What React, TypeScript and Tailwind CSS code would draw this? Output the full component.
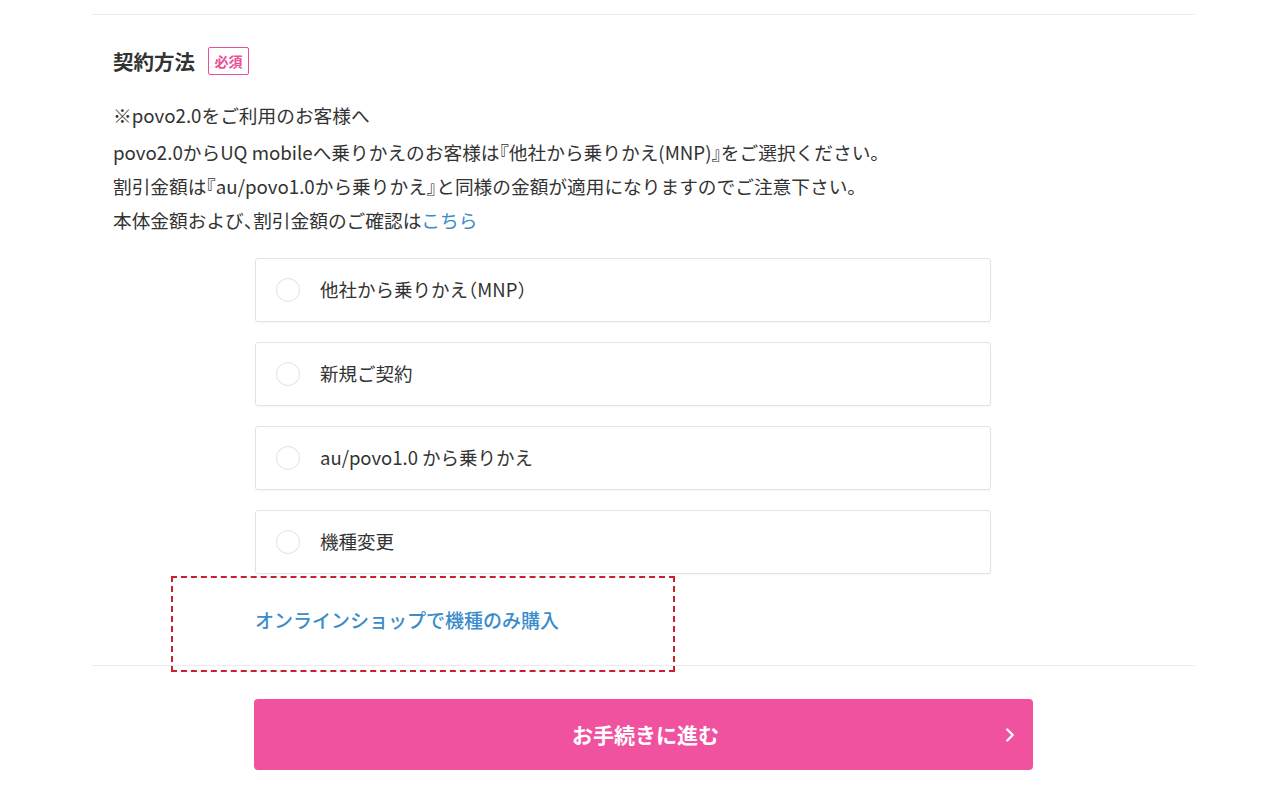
import type { ReactNode } from 'react';
import { ChevronRight } from 'lucide-react';

const font = { fontFamily: '"Noto Sans CJK JP", "Noto Sans", sans-serif' };

// half-width punctuation, like the site's font renders it
const P = ({ children }: { children: ReactNode }) => (
  <span style={{ fontFeatureSettings: '"halt"' }}>{children}</span>
);

const options: ReactNode[] = [
  <>
    他社から乗りかえ<P>（</P>MNP<P>）</P>
  </>,
  '新規ご契約',
  'au/povo1.0 から乗りかえ',
  '機種変更',
];

export default function App() {
  return (
    <div className="min-h-[800px] bg-white text-[#333]" style={font}>
      <div className="ml-[92px] mr-[85px] pt-[14px]">
        <div className="h-px bg-[#ececec]" />

        <div className="px-[21px]">
          <div className="mt-[32px] flex h-[28px] items-center gap-[13px]">
            <h2 className="text-[20.5px] font-bold leading-none">契約方法</h2>
            <span className="flex h-[28px] w-[41px] items-center justify-center rounded-[2px] border border-[#e8509a] text-[14px] font-bold text-[#e8509a]">
              必須
            </span>
          </div>

          <div className="mt-[23px] text-[18.7px] leading-[34px]">
            <p className="mb-[3px]">※povo2.0をご利用のお客様へ</p>
            <p>
              povo2.0からUQ mobileへ乗りかえのお客様は<P>『</P>他社から乗りかえ(MNP)<P>』</P>をご選択ください。
            </p>
            <p>
              割引金額は<P>『</P>au/povo1.0から乗りかえ<P>』</P>と同様の金額が適用になりますのでご注意下さい。
            </p>
            <p>
              本体金額および<P>、</P>割引金額のご確認は<span className="text-[#3b8cca]">こちら</span>
            </p>
          </div>
        </div>

        <div className="ml-[163px] mt-[21px] flex w-[736px] flex-col gap-[20px]">
          {options.map((o, i) => (
            <label
              key={i}
              className="flex h-[64px] items-center gap-[20px] rounded-[3px] border border-[#e3e3e3] bg-white px-[20px] shadow-[0_1px_2px_rgba(0,0,0,0.04)]"
            >
              <span className="h-[24px] w-[24px] rounded-full border border-[#e2e2e2]" />
              <span className="text-[18.5px]">{o}</span>
            </label>
          ))}
        </div>

        <div className="relative ml-[163px] flex h-[91px] items-center">
          <div className="pointer-events-none absolute left-[-84px] top-[2px] h-[96px] w-[504px] border-2 border-dashed border-[#c8202e]" />
          <a className="pt-[2px] text-[19px] font-medium text-[#3b8cca]">オンラインショップで機種のみ購入</a>
        </div>

        <div className="h-px bg-[#ececec]" />

        <div className="ml-[162px] mt-[33px] flex h-[71px] w-[779px] items-center rounded-[4px] bg-[#f052a0] text-white">
          <span className="flex-1 pl-[38px] text-center text-[21px] font-bold">お手続きに進む</span>
          <ChevronRight className="mr-[12px] h-[22px] w-[22px]" strokeWidth={2.5} />
        </div>
      </div>
    </div>
  );
}
